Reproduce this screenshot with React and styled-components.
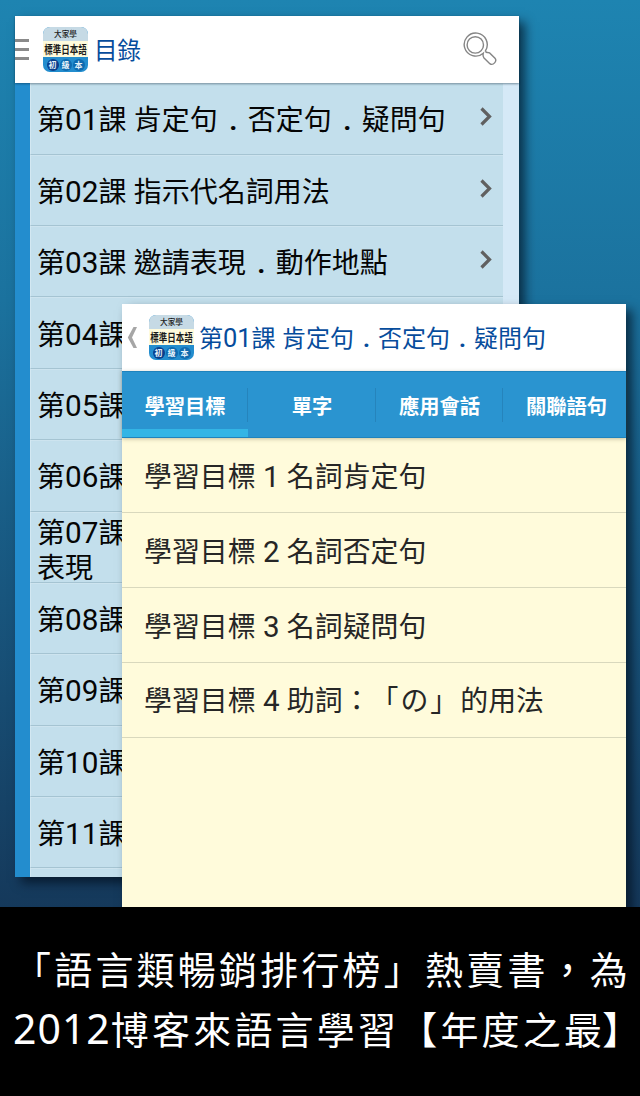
import React from "react";
import styled, { createGlobalStyle, ThemeProvider } from "styled-components";

const theme = {
  fonts: {
    body: `"Noto Sans CJK TC", "Noto Sans CJK JP", sans-serif`,
    number: `Roboto, "Noto Sans CJK TC", sans-serif`,
  },
  colors: {
    title: "#064c9c",
    blue: "#2a94d0",
    list: "#c3dfec",
    cream: "#fffbdb",
  },
};

const GlobalStyle = createGlobalStyle`
  * {
    box-sizing: border-box;
  }

  body {
    margin: 0;
    background: #000;
  }
`;

const Page = styled.div`
  width: 640px;
  height: 1096px;
  overflow: hidden;
  font-family: ${({ theme }) => theme.fonts.body};
  text-spacing-trim: space-all;
`;

const Stage = styled.div`
  position: relative;
  height: 907px;
  padding: 16px 0 0 15px;
  overflow: hidden;
  background: linear-gradient(#1e84b1 0, #1b729e 300px, #18557d 600px, #15395b 907px);
`;

const Screen = styled.section`
  width: 504px;
  display: flex;
  flex-direction: column;
`;

const ContentsScreen = styled(Screen)`
  height: 861px;
  box-shadow: 6px 6px 10px rgba(0, 10, 25, 0.65);
`;

/* the lesson screen lies over the table of contents */
const LessonScreen = styled(Screen)`
  position: absolute;
  left: 122px;
  top: 304px;
  height: 640px;
  background: ${({ theme }) => theme.colors.cream};
  box-shadow: 6px 6px 10px rgba(0, 10, 25, 0.65);
`;

const Header = styled.header`
  position: relative;
  flex: none;
  display: flex;
  align-items: center;
  height: 67px;
  background: #fff;
`;

const ContentsHeader = styled(Header)`
  box-shadow: 0 1px 2px rgba(0, 30, 50, 0.45);
`;

const Title = styled.h1`
  flex: 1;
  margin: 0 0 2px ${({ $gap }) => $gap};
  font-size: ${({ $size }) => $size};
  font-weight: 400;
  line-height: 36px;
  white-space: nowrap;
  color: ${({ theme }) => theme.colors.title};
`;

const Menu = styled.div`
  width: 14px;
  height: 21px;
  margin-right: 14px;
  display: flex;
  flex-direction: column;
  justify-content: space-between;

  i {
    height: 3px;
    background: #8a8a8a;
  }
`;

const Badge = styled.div`
  flex: none;
  width: 45px;
  height: 45px;
  border-radius: 7px;
  overflow: hidden;
  display: grid;
  grid-template-rows: 14px 16px 15px;
  background: #238dce;
  font-weight: 700;
  line-height: 1;
  white-space: nowrap;
  color: #1b1b1b;
`;

const BadgeTop = styled.div`
  display: flex;
  align-items: center;
  justify-content: center;
  background: #c6dae5;
  font-size: 7.6px;
  font-weight: 500;
`;

const BadgeName = styled.div`
  display: flex;
  align-items: center;
  justify-content: center;
  background: #fffbdc;
  font-size: 8.5px;

  span {
    transform: scaleY(1.3);
  }
`;

const BadgeLevel = styled.div`
  display: flex;
  align-items: center;
  justify-content: center;
  gap: 1px;

  span {
    width: 12px;
    height: 12px;
    display: flex;
    align-items: center;
    justify-content: center;
    border-radius: 50%;
    background: #0e6bb0;
    font-size: 8px;
    color: #e6f2fa;
  }

  span:first-child {
    background: #0a3f8c;
  }
`;

const ListArea = styled.div`
  flex: 1;
  min-height: 0;
  overflow: hidden;
  padding: 0 16px 0 15px;
  background: linear-gradient(90deg, #238dce 15px, #d5e9f7 15px);
`;

const Lesson = styled.div`
  height: 71.35px;
  display: flex;
  align-items: center;
  justify-content: space-between;
  padding: ${({ $twoLines }) => ($twoLines ? "5px" : "1px")} 10px 0 6px;
  background: ${({ theme }) => theme.colors.list};
  box-shadow: inset 0 1px #cde4ef;
  border-bottom: 1px solid #a5c4d2;
  border-left: 1px solid #d3e8f2;
  font-size: 28px;
  line-height: 35px;
  color: #050505;

  &:first-child {
    height: 71.8px;
  }

  svg {
    margin-bottom: 3px;
  }
`;

const Num = styled.span`
  font-family: ${({ theme }) => theme.fonts.number};
  font-size: 1.06em;
  line-height: 1;
`;

const Dot = styled.span`
  display: inline-block;
  width: ${({ $wide }) => ($wide ? "1.07em" : "1em")};
  padding-left: 1px;
  text-align: center;
  line-height: 1;
  font-family: ${({ theme }) => theme.fonts.number};
  font-weight: 700;
`;

const Kana = styled.span`
  letter-spacing: 2px;
`;

const Tabs = styled.nav`
  position: relative;
  flex: none;
  height: 67px;
  display: grid;
  grid-template-columns: 126px 128px 127px 123px;
  background: ${({ theme }) => theme.colors.blue};
  border-top: 1px solid #1f83bd;
  border-bottom: 1px solid #1f83bd;
  box-shadow: 0 1px 4px rgba(90, 80, 40, 0.35);
`;

const Tab = styled.div`
  display: flex;
  align-items: center;
  justify-content: center;
  padding-top: ${({ $active }) => ($active ? "8px" : "0")};
  border-bottom: ${({ $active }) => ($active ? "8px solid #33b5e5" : "0")};
  font-size: 20.3px;
  font-weight: 700;
  color: #fff;
`;

const TabCell = styled.div`
  display: grid;
  background: linear-gradient(#2584bc, #2584bc) no-repeat right 16px / 1px 34px;

  &:last-child {
    padding-left: 4px;
    background: none;
  }
`;

const Goal = styled.div`
  flex: none;
  height: 74.8px;
  display: flex;
  align-items: center;
  padding: 0 22px 1px;
  border-bottom: 1px solid #d9d8bd;
  font-size: 27.9px;
  white-space: pre;
  color: #262626;

  nav + & {
    height: 75.4px;
  }
`;

const Caption = styled.footer`
  height: 189px;
  padding: 31px 0 0 13px;
  background: #000;
  color: #fff;

  p {
    margin: 0;
    font-size: 38px;
    line-height: 60px;
    letter-spacing: 3.2px;
    white-space: nowrap;
  }
`;

const Year = styled.span`
  font-family: "Noto Sans", sans-serif;
  font-size: 41px;
  line-height: 1;
  letter-spacing: 1px;
`;

const Close = styled.span`
  margin-left: -3px;
  letter-spacing: 0;
`;

const lessons = [
  "第01課 肯定句．否定句．疑問句",
  "第02課 指示代名詞用法",
  "第03課 邀請表現．動作地點",
  "第04課",
  "第05課",
  "第06課",
  "第07課\n表現",
  "第08課",
  "第09課",
  "第10課",
  "第11課",
  "",
];

const tabs = ["學習目標", "單字", "應用會話", "關聯語句"];

const goals = [
  "學習目標 1 名詞肯定句",
  "學習目標 2 名詞否定句",
  "學習目標 3 名詞疑問句",
  "學習目標 4 助詞：「の」的用法",
];

const MixedText = styled.span`
  white-space: pre;
`;

// digits are set in Roboto, a little larger than the characters around them
const Mixed = ({ text, wide }) => (
  <MixedText>
    {text.split(/([0-9 ]+|．|「の」)/).map((part, i) => {
      if (part === "．") return <Dot key={i} $wide={wide}>.</Dot>;
      if (part === "「の」") return <Kana key={i}>{part}</Kana>;
      return /^[0-9 ]+$/.test(part) ? <Num key={i}>{part}</Num> : part;
    })}
  </MixedText>
);

const Logo = () => (
  <Badge>
    <BadgeTop>大家學</BadgeTop>
    <BadgeName>
      <span>標準日本語</span>
    </BadgeName>
    <BadgeLevel>
      <span>初</span>
      <span>級</span>
      <span>本</span>
    </BadgeLevel>
  </Badge>
);

const SearchButton = styled.svg`
  flex: none;
  margin-right: 22px;
`;

const SearchIcon = () => (
  <SearchButton width="35" height="35" viewBox="0 0 35 35" fill="none" stroke="#858585" strokeWidth="1.4">
    <path d="M21.3 21.2A11.5 11.5 0 1 1 23.5 18.6L24.2 20.3L27.6 20.9L33 26.3Q34.7 28.4 32.8 30.6Q30.4 33.5 27.8 31.7L21.8 25.7Q20.6 24 21.3 21.2Z" />
    <circle cx="13.3" cy="12.9" r="8.2" />
  </SearchButton>
);

const Chevron = () => (
  <svg width="14" height="20" viewBox="0 0 14 20" fill="none" stroke="#606060" strokeWidth="3.2">
    <path d="M2.5 1.5L10.5 9.5L2.5 17.5" />
  </svg>
);

const BackButton = styled.svg`
  flex: none;
  margin: 0 11px 0 5px;
`;

const App = () => {
  return (
    <ThemeProvider theme={theme}>
      <GlobalStyle />
      <Page>
        <Stage>
          <ContentsScreen>
            <ContentsHeader>
              <Menu>
                <i />
                <i />
                <i />
              </Menu>
              <Logo />
              <Title $size="23.5px" $gap="6px">目錄</Title>
              <SearchIcon />
            </ContentsHeader>
            <ListArea>
              {lessons.map((lesson, i) => (
                <Lesson key={i} $twoLines={lesson.includes("\n")}>
                  <Mixed text={lesson} wide />
                  {i < 3 && <Chevron />}
                </Lesson>
              ))}
            </ListArea>
          </ContentsScreen>
          <LessonScreen>
            <Header>
              <BackButton width="11" height="21" viewBox="0 0 11 21" fill="#a6a6a6">
                <path d="M6.5 0H10L5 10.5L10 21H6.5L0.8 10.5Z" />
              </BackButton>
              <Logo />
              <Title $size="24px" $gap="5px">
                <Mixed text="第01課 肯定句．否定句．疑問句" />
              </Title>
            </Header>
            <Tabs>
              {tabs.map((tab, i) => (
                <TabCell key={tab}>
                  <Tab $active={i === 0}>{tab}</Tab>
                </TabCell>
              ))}
            </Tabs>
            {goals.map((goal) => (
              <Goal key={goal}>
                <Mixed text={goal} />
              </Goal>
            ))}
          </LessonScreen>
        </Stage>
        <Caption>
          <p>「語言類暢銷排行榜」熱賣書，為</p>
          <p>
            <Year>2012</Year>博客來語言學習【年度之最<Close>】</Close>
          </p>
        </Caption>
      </Page>
    </ThemeProvider>
  );
};

export default App;
